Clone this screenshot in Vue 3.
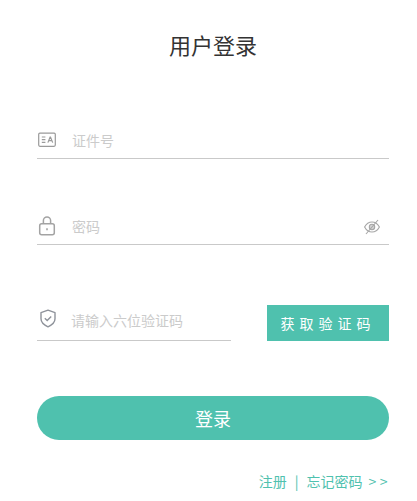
<template>
  <div class="login">
    <h1 class="title">用户登录</h1>

    <form class="login-form" @submit.prevent>
      <div class="field field-id">
        <svg class="icon" width="18" height="16" viewBox="0 0 18 16" fill="none" stroke="#9a9a9a" stroke-width="1.2">
          <rect x="0.7" y="1.1" width="16.6" height="13.2" rx="1.2" />
          <path d="M3.8 5h3.6M3.8 7.7h3.6M3.8 10.4h3.6" />
          <path d="M9.9 10.6l2.2-5.6h.4l2.2 5.6M10.8 8.6h3" />
        </svg>
        <span class="placeholder">证件号</span>
      </div>

      <div class="field field-password">
        <svg class="icon" width="18" height="20" viewBox="0 0 18 20" fill="none" stroke="#a3a3a3" stroke-width="1.5">
          <rect x="1.7" y="7.7" width="14.6" height="11" rx="2" />
          <path d="M5.4 7.7V4.6a3.6 3.6 0 0 1 7.2 0v3.1" />
          <path d="M9 12.2v2" stroke-width="1.6" />
        </svg>
        <span class="placeholder">密码</span>
        <svg class="eye" width="18" height="18" viewBox="0 0 18 18" fill="none" stroke="#a6a6a6" stroke-width="1.1">
          <path d="M1.6 9C3.4 5.6 6 4 9 4s5.6 1.6 7.4 5c-1.8 3.4-4.4 5-7.4 5S3.4 12.4 1.6 9z" />
          <circle cx="9" cy="9" r="2.7" fill="#d4d4d4" />
          <path d="M15 2 3 16" />
        </svg>
      </div>

      <div class="code-row">
        <div class="field field-code">
          <svg class="icon" width="18" height="19" viewBox="0 0 18 19" fill="none" stroke="#8f939b" stroke-width="1.4">
            <path d="M9 1.2 16 3.6v6.2c0 3.6-3 6.2-7 8-4-1.8-7-4.4-7-8V3.6z" stroke-linejoin="round" />
            <path d="M5.8 9.2l2.4 2.3 4-4" />
          </svg>
          <span class="placeholder">请输入六位验证码</span>
        </div>
        <button type="button" class="code-btn">获取验证码</button>
      </div>

      <button type="submit" class="submit-btn">登录</button>
    </form>

    <div class="links">
      <a>注册</a>
      <span class="sep">|</span>
      <a>忘记密码</a>
      <span class="arrows">&gt;&gt;</span>
    </div>
  </div>
</template>

<script setup>
</script>

<style>
html,
body {
  margin: 0;
  background: #fff;
}
</style>

<style scoped>
.login {
  width: 417px;
  height: 501px;
  padding: 0 28px 0 37px;
  box-sizing: border-box;
  overflow: hidden;
  font-family: "Noto Sans CJK SC", "Liberation Sans", sans-serif;
}

.title {
  margin: 0;
  padding-top: 28px;
  height: 33px;
  line-height: 33px;
  font-size: 22px;
  font-weight: 400;
  text-align: center;
  color: #333;
}

.login-form {
  display: flex;
  flex-direction: column;
  margin-top: 64px;
}

.field {
  display: flex;
  align-items: center;
  height: 29px;
  padding-bottom: 4px;
  border-bottom: 1px solid #c9c9c9;
}

.field-password {
  margin-top: 52px;
}

.field-code {
  width: 194px;
  height: 36px;
  padding-bottom: 0;
  flex-shrink: 0;
  align-items: flex-start;
}

.icon {
  flex-shrink: 0;
  margin-left: 1px;
}

.field-code .icon {
  margin-top: 5px;
  margin-left: 2px;
}

.placeholder {
  margin-left: 16px;
  font-size: 14px;
  line-height: 20px;
  color: #cbcbcb;
}

.field-code .placeholder {
  margin-left: 14px;
  margin-top: 6px;
}

.eye {
  margin-left: auto;
  margin-right: 8px;
  margin-top: 2px;
}

.code-row {
  display: flex;
  justify-content: space-between;
  align-items: flex-start;
  margin-top: 59px;
  height: 44px;
}

.code-btn {
  width: 122px;
  height: 36px;
  margin-top: 1px;
  padding: 0;
  border: none;
  background: #4fc1ae;
  color: #fff;
  font-family: inherit;
  font-size: 14px;
  letter-spacing: 5px;
}

.submit-btn {
  height: 44px;
  margin-top: 48px;
  padding: 0;
  border: none;
  border-radius: 22px;
  background: #4fc1ae;
  color: #fff;
  font-family: inherit;
  font-size: 18px;
}

.links {
  display: flex;
  justify-content: flex-end;
  align-items: center;
  height: 20px;
  margin-top: 31px;
  font-size: 14px;
  color: #4fc1ae;
}

.sep {
  margin: 0 8px;
}

.arrows {
  margin: 0 -2px 0 6px;
  letter-spacing: 3.5px;
}
</style>
